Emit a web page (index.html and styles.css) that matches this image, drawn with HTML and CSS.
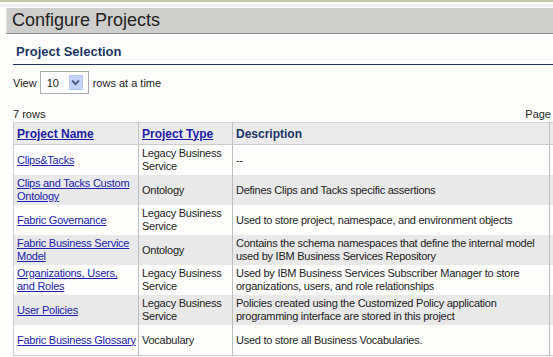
FILE: index.html
```html
<!DOCTYPE html>
<html lang="en">
<head>
    <meta charset="UTF-8">
    <title>Configure Projects</title>
    <link rel="stylesheet" href="styles.css">
</head>
<body>
    <div class="topline"></div>
    <div class="titlebar">Configure Projects</div>

    <div class="content">
        <h2 class="section">Project Selection</h2>

        <div class="viewrow">
            <span>View</span>
            <div class="select">
                <span class="select-val">10</span>
                <span class="select-btn">
                    <svg width="9" height="7" viewBox="0 0 9 7">
                        <path d="M1 1.5 L4.5 5 L8 1.5" fill="none" stroke="#4d6185" stroke-width="2"/>
                    </svg>
                </span>
            </div>
            <span>rows at a time</span>
        </div>

        <div class="tableinfo">
            <span>7 rows</span>
            <span>Page</span>
        </div>

        <table class="projects">
            <colgroup>
                <col class="c-name">
                <col class="c-type">
                <col class="c-desc">
                <col class="c-more">
            </colgroup>
            <thead>
                <tr>
                    <th><a href="#">Project Name</a></th>
                    <th><a href="#">Project Type</a></th>
                    <th>Description</th>
                    <th></th>
                </tr>
            </thead>
            <tbody>
                <tr>
                    <td><a href="#">Clips&amp;Tacks</a></td>
                    <td>Legacy Business Service</td>
                    <td>--</td>
                    <td></td>
                </tr>
                <tr>
                    <td><a href="#">Clips and Tacks Custom Ontology</a></td>
                    <td>Ontology</td>
                    <td>Defines Clips and Tacks specific assertions</td>
                    <td></td>
                </tr>
                <tr>
                    <td><a href="#">Fabric Governance</a></td>
                    <td>Legacy Business Service</td>
                    <td>Used to store project, namespace, and environment objects</td>
                    <td></td>
                </tr>
                <tr>
                    <td><a href="#">Fabric Business Service Model</a></td>
                    <td>Ontology</td>
                    <td>Contains the schema namespaces that define the internal model used by IBM Business Services Repository</td>
                    <td></td>
                </tr>
                <tr>
                    <td><a href="#">Organizations, Users, and Roles</a></td>
                    <td>Legacy Business Service</td>
                    <td>Used by IBM Business Services Subscriber Manager to store organizations, users, and role relationships</td>
                    <td></td>
                </tr>
                <tr>
                    <td><a href="#">User Policies</a></td>
                    <td>Legacy Business Service</td>
                    <td>Policies created using the Customized Policy application programming interface are stored in this project</td>
                    <td></td>
                </tr>
                <tr>
                    <td><a href="#">Fabric Business Glossary</a></td>
                    <td>Vocabulary</td>
                    <td>Used to store all Business Vocabularies.</td>
                    <td></td>
                </tr>
            </tbody>
        </table>
    </div>
</body>
</html>
```

FILE: styles.css
```css
body {
    margin: 0;
    font-family: "Liberation Sans", Arial, sans-serif;
    font-size: 11px;
    color: #222;
    background-color: #fdfefc;
    overflow: hidden;
}

.topline {
    height: 2px;
    background-color: #c4c7a6;
    border-bottom: 2px solid #fdfefc;
    box-shadow: 0 3px 0 #efefef;
}

.titlebar {
    margin: 4px 0 0 6px;
    height: 25px;
    line-height: 25px;
    padding-left: 5px;
    font-size: 18px;
    color: #222;
    background-color: #cececc;
    border-left: 1px solid #e2e2e0;
    border-bottom: 1px solid #8a8a8a;
}

.content {
    padding-left: 13px;
}

.section {
    margin: 0;
    padding: 11px 0 5px 3px;
    font-size: 13px;
    font-weight: bold;
    color: #1b3466;
    line-height: 14px;
    border-bottom: 1px solid #1b3466;
    box-shadow: 0 -4px 0 #fdfefc inset, 0 -5px 0 #efefef inset;
}

.viewrow {
    display: flex;
    align-items: center;
    gap: 3px;
    margin-top: 6px;
    height: 23px;
}

.select {
    display: flex;
    align-items: center;
    justify-content: space-between;
    width: 36px;
    height: 21px;
    border: 1px solid #a5acb2;
    background-color: #fff;
    padding: 0 5px 0 6px;
    margin-right: 1px;
}

.select-btn {
    display: flex;
    align-items: center;
    justify-content: center;
    width: 14px;
    height: 15px;
    background-color: #c3d3f8;
    border: 1px solid #b7c8f0;
    box-sizing: border-box;
}

.tableinfo {
    display: flex;
    justify-content: space-between;
    margin-top: 14px;
    padding-right: 2px;
    line-height: 13px;
}

.projects {
    margin-top: 1px;
    width: 620px;
    table-layout: fixed;
    border-collapse: collapse;
    border-left: 1px solid #cfcfcf;
    border-bottom: 1px solid #c8c8c8;
}

.c-name { width: 125px; }
.c-type { width: 94px; }
.c-desc { width: 317px; }
.c-more { width: 84px; }

.projects th {
    height: 21px;
    padding: 0 3px;
    text-align: left;
    font-size: 12px;
    font-weight: bold;
    color: #1b3466;
    background-color: #ebebeb;
    border-top: 1px solid #d6d6d6;
    border-bottom: 1px solid #cbcbcb;
    border-right: 1px solid #c4c4c4;
}

.projects th a {
    color: #1d1da3;
}

.projects td {
    height: 26px;
    padding: 2px 1px 2px 3px;
    line-height: 13px;
    letter-spacing: -0.25px;
    vertical-align: middle;
    border-right: 1px solid #bdbdbd;
}

.projects tbody tr:nth-child(even) td {
    background-color: #e9e9e9;
}

.projects td a {
    color: #2020b0;
}
```
